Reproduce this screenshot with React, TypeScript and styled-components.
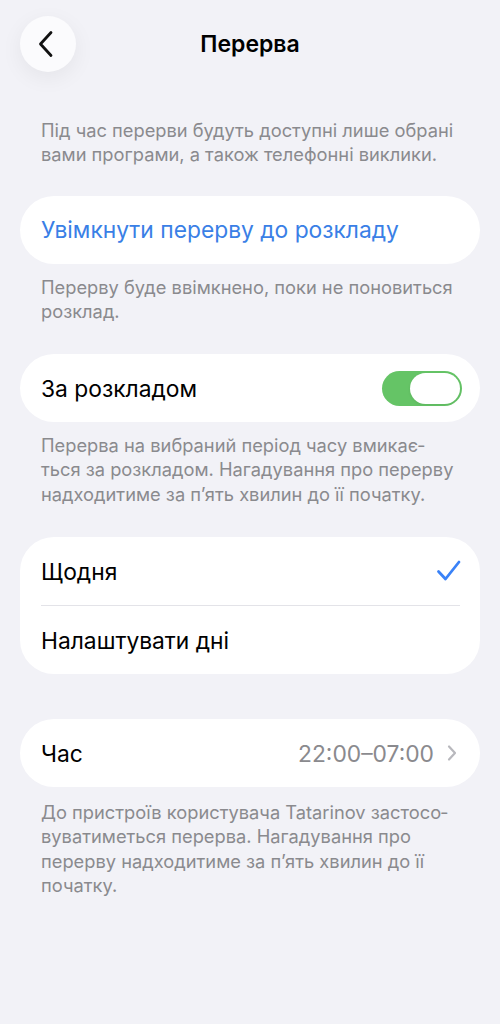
import React, { useState } from "react";
import styled, { createGlobalStyle } from "styled-components";

const GlobalStyle = createGlobalStyle`
  html, body {
    margin: 0;
    padding: 0;
    background: #f2f2f7;
  }
  body {
    font-family: Inter, "Noto Sans", sans-serif;
    -webkit-font-smoothing: antialiased;
  }
`;

export default function App() {
  const [scheduled, setScheduled] = useState<boolean>(true);
  const [mode, setMode] = useState<"daily" | "custom">("daily");

  return (
    <Page>
      <GlobalStyle />
      <Header>
        <BackButton aria-label="Назад">
          <svg width="18" height="28" viewBox="0 0 18 28" fill="none">
            <path
              d="M14 2.5L3.5 14L14 25.5"
              stroke="#111"
              strokeWidth="2.8"
              strokeLinecap="round"
              strokeLinejoin="round"
            />
          </svg>
        </BackButton>
        <Title>Перерва</Title>
      </Header>

      <Content>
        <Footnote $top={30}>
          Під час перерви будуть доступні лише обрані вами програми, а також
          телефонні виклики.
        </Footnote>

        <Card $top={29}>
          <Row>
            <ActionLabel>Увімкнути перерву до розкладу</ActionLabel>
          </Row>
        </Card>
        <Footnote>
          Перерву буде ввімкнено, поки не поновиться розклад.
        </Footnote>

        <Card $top={31}>
          <Row>
            <Label>За розкладом</Label>
            <Toggle
              $on={scheduled}
              onClick={() => setScheduled(!scheduled)}
              aria-pressed={scheduled}
            >
              <Knob $on={scheduled} />
            </Toggle>
          </Row>
        </Card>
        <Footnote>
          Перерва на вибраний період часу вмикає­ться за розкладом. Нагадування
          про перерву надходитиме за п’ять хвилин до її початку.
        </Footnote>

        <Card $top={31}>
          <Row onClick={() => setMode("daily")}>
            <Label>Щодня</Label>
            {mode === "daily" && (
              <svg width="26" height="24" viewBox="0 0 26 24" fill="none">
                <path
                  d="M2.5 12.5L9.5 20L23 3"
                  stroke="#3a82f7"
                  strokeWidth="2.8"
                  strokeLinecap="round"
                  strokeLinejoin="round"
                />
              </svg>
            )}
          </Row>
          <Separator />
          <Row onClick={() => setMode("custom")}>
            <Label>Налаштувати дні</Label>
          </Row>
        </Card>

        <Card $top={45}>
          <Row>
            <Label>Час</Label>
            <Value>
              22:00–07:00
              <svg width="10" height="18" viewBox="0 0 10 18" fill="none">
                <path
                  d="M2 2.5L8 9L2 15.5"
                  stroke="#b8b8bd"
                  strokeWidth="2.2"
                  strokeLinecap="round"
                  strokeLinejoin="round"
                />
              </svg>
            </Value>
          </Row>
        </Card>
        <Footnote $top={13}>
          До пристроїв користувача Tatarinov застосо­вуватиметься перерва.
          Нагадування про перерву надходитиме за п’ять хвилин до її початку.
        </Footnote>
      </Content>
    </Page>
  );
}

const Page = styled.div`
  min-height: 1024px;
  background: #f2f2f7;
`;

const Header = styled.div`
  height: 88px;
  padding: 16px 20px 0;
  box-sizing: border-box;
  display: flex;
  align-items: flex-start;
  position: relative;
`;

const BackButton = styled.button`
  width: 56px;
  height: 56px;
  border-radius: 50%;
  border: none;
  background: #fbfbfd;
  box-shadow: 0 6px 22px rgba(0, 0, 0, 0.06);
  display: flex;
  align-items: center;
  justify-content: center;
  padding: 0 4px 0 0;
  cursor: pointer;
`;

const Title = styled.h1`
  position: absolute;
  left: 0;
  right: 0;
  top: 29px;
  margin: 0;
  text-align: center;
  font-size: 23px;
  font-weight: 600;
  line-height: 30px;
  color: #000;
  pointer-events: none;
`;

const Content = styled.div`
  padding: 0 20px;
  display: flex;
  flex-direction: column;
`;

const Footnote = styled.p<{ $top?: number }>`
  margin: ${(p) => p.$top ?? 11}px 0 0;
  padding: 0 23px 0 21px;
  font-size: 18.3px;
  line-height: 24.3px;
  color: #8a8a8e;
  hyphens: manual;
`;

const Card = styled.div<{ $top?: number }>`
  margin-top: ${(p) => p.$top ?? 0}px;
  background: #fff;
  border-radius: 34px;
  overflow: hidden;
`;

const Row = styled.div`
  height: 68px;
  padding: 0 18px 0 21px;
  display: flex;
  align-items: center;
  justify-content: space-between;
  cursor: pointer;
`;

const Label = styled.span`
  font-size: 22.8px;
  color: #000;
`;

const ActionLabel = styled.span`
  font-size: 22.8px;
  color: #3a7fe6;
`;

const Separator = styled.div`
  height: 1px;
  margin: 0 20px 0 21px;
  background: #e3e3e8;
`;

const Toggle = styled.button<{ $on: boolean }>`
  width: 80px;
  height: 35px;
  border-radius: 18px;
  border: none;
  padding: 2px;
  box-sizing: border-box;
  background: ${(p) => (p.$on ? "#65c466" : "#e9e9ea")};
  display: flex;
  justify-content: ${(p) => (p.$on ? "flex-end" : "flex-start")};
  cursor: pointer;
`;

const Knob = styled.span<{ $on: boolean }>`
  width: 50px;
  height: 31px;
  border-radius: 16px;
  background: #fff;
  box-shadow: 0 1px 3px rgba(0, 0, 0, 0.08);
`;

const Value = styled.span`
  display: flex;
  align-items: center;
  gap: 13px;
  margin-right: 5px;
  font-size: 22.8px;
  color: #8a8a8e;
`;
